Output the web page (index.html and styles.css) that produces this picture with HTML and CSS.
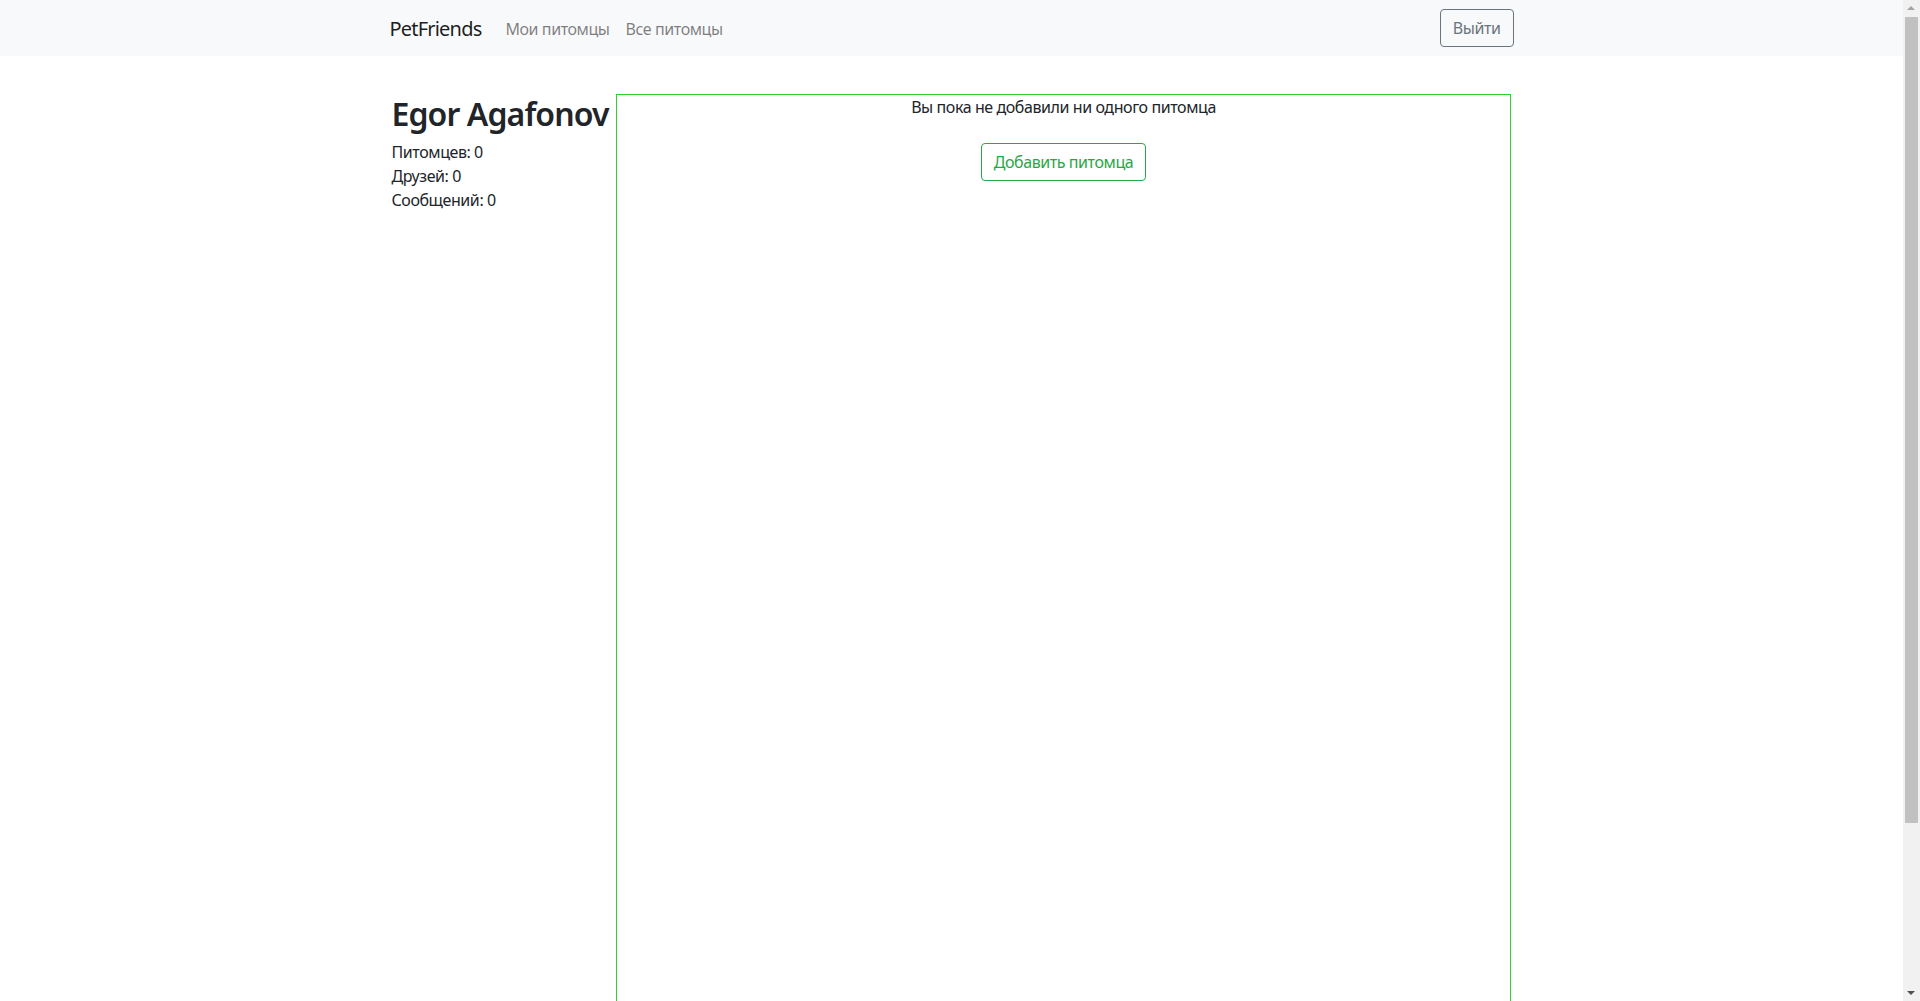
FILE: index.html
```html
<!DOCTYPE html>
<html lang="ru">
<head>
<meta charset="utf-8">
<title>PetFriends</title>
<link rel="stylesheet" href="styles.css">
</head>
<body>
<nav class="navbar">
  <div class="nav-inner">
    <a class="brand" href="#">PetFriends</a>
    <ul class="nav-links">
      <li><a href="#">Мои питомцы</a></li>
      <li><a href="#">Все питомцы</a></li>
    </ul>
    <button class="btn btn-secondary-outline">Выйти</button>
  </div>
</nav>
<main class="container">
  <aside class="profile">
    <h2 class="name">Egor Agafonov</h2>
    <div class="stat">Питомцев: 0</div>
    <div class="stat">Друзей: 0</div>
    <div class="stat">Сообщений: 0</div>
  </aside>
  <section class="pets-box">
    <div class="empty">
      <p class="empty-text">Вы пока не добавили ни одного питомца</p>
      <button class="btn btn-success-outline">Добавить питомца</button>
    </div>
  </section>
</main>
<div class="scrollbar">
  <span class="arrow arrow-up"></span>
  <span class="thumb"></span>
  <span class="arrow arrow-down"></span>
</div>
</body>
</html>
```
FILE: styles.css
```css
html { overflow: hidden; }
body {
  margin: 0;
  width: 1903px;
  font-family: "Segoe UI", "Noto Sans", "Open Sans", sans-serif;
  font-size: 16px;
  line-height: 24px;
  letter-spacing: -0.42px;
  color: #212529;
  background: #fff;
}
.navbar {
  background: #f8f9fa;
  height: 56px;
}
.nav-inner {
  width: 1140px;
  margin: 0 auto;
  padding: 0 8px;
  box-sizing: border-box;
  height: 56px;
  display: flex;
  align-items: center;
}
.brand {
  font-size: 20px;
  line-height: 30px;
  letter-spacing: -0.8px;
  color: rgba(0,0,0,.9);
  text-decoration: none;
  margin-right: 16px;
  padding-top: 2px;
}
.nav-links {
  list-style: none;
  margin: 0;
  padding: 0;
  display: flex;
  flex: 1;
}
.nav-links a {
  display: block;
  padding: 9px 8px 7px;
  color: rgba(0,0,0,.5);
  text-decoration: none;
}
.btn {
  font-family: inherit;
  font-size: 16px;
  line-height: 24px;
  letter-spacing: -0.42px;
  padding: 6px 12px;
  border-radius: 4px;
  background: transparent;
  cursor: pointer;
}
.btn-secondary-outline {
  color: #6c757d;
  border: 1px solid #6c757d;
}
.btn-success-outline {
  color: #28a745;
  border: 1px solid #28a745;
}
.container {
  width: 1140px;
  margin: 38px auto 0;
  display: flex;
  align-items: flex-start;
}
.profile {
  width: 234.5px;
  padding-left: 10px;
  box-sizing: border-box;
  flex-shrink: 0;
}
.name {
  margin: 1px 0 7px;
  font-size: 32px;
  line-height: 38px;
  font-weight: 600;
  letter-spacing: -0.9px;
  white-space: nowrap;
}
.stat { line-height: 24px; }
.pets-box {
  width: 895px;
  height: 1100px;
  border: 1px solid #32cd32;
  box-sizing: border-box;
  flex-shrink: 0;
}
.empty {
  text-align: center;
}
.empty-text { margin: 0 0 24px; }
.scrollbar {
  position: fixed;
  top: 0;
  right: 0;
  width: 17px;
  height: 100%;
  background: #f1f1f1;
}
.thumb {
  position: absolute;
  left: 2px;
  right: 2px;
  top: 17px;
  height: 806px;
  background: #c1c1c1;
}
.arrow {
  position: absolute;
  left: 4px;
  width: 0;
  height: 0;
  border-left: 4px solid transparent;
  border-right: 4px solid transparent;
}
.arrow-up { top: 6px; border-bottom: 4px solid #a3a3a3; }
.arrow-down { bottom: 6px; border-top: 4px solid #505050; }
```
